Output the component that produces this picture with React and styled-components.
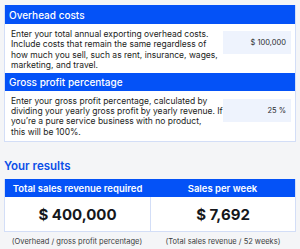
import React from "react";
import styled, { createGlobalStyle } from "styled-components";

const Global = createGlobalStyle`
  html, body { margin: 0; padding: 0; background: #f4f5f7; }
  body { font-family: Inter, "Noto Sans", sans-serif; }
`;

const Page = styled.div`
  padding: 5px 4px 0 4px;
  width: 292px;
`;

const Card = styled.div`
  background: #fff;
  border: 1px solid #d3def7;
  border-top: none;
`;

const Header = styled.div`
  background: #0452f7;
  color: #fff;
  height: ${(p) => p.$h || 19}px;
  display: flex;
  align-items: center;
  padding-left: 4px;
  font-size: 10px;
  font-weight: 500;
`;

const Body = styled.div`
  display: flex;
  align-items: flex-start;
  justify-content: space-between;
  padding: ${(p) => p.$pad};
`;

const Desc = styled.p`
  margin: 0;
  width: 214px;
  font-size: 8.5px;
  line-height: 10.4px;
  color: #1b1d22;
  white-space: nowrap;
`;

const Input = styled.div`
  width: 64px;
  height: 23px;
  background: #eef3fd;
  display: flex;
  align-items: center;
  justify-content: flex-end;
  padding-right: 5px;
  font-size: 7.5px;
  color: #2a2c30;
  margin-top: ${(p) => p.$mt || 0}px;
`;

const ResultsTitle = styled.h2`
  margin: 17px 0 6px 0;
  font-size: 11.5px;
  font-weight: 600;
  color: #0b4fe8;
`;

const Table = styled.div`
  display: grid;
  grid-template-columns: 1fr 1fr;
  border: 1px solid #d3def7;
  border-top: none;
  background: #fff;
`;

const TH = styled.div`
  background: #0452f7;
  color: #fff;
  height: 18px;
  display: flex;
  align-items: center;
  justify-content: center;
  font-size: 9.5px;
  font-weight: 600;
`;

const TD = styled.div`
  height: 34px;
  display: flex;
  align-items: center;
  justify-content: center;
  font-size: 15px;
  font-weight: 700;
  color: #15171b;
  border-left: ${(p) => (p.$divider ? "1px solid #d3def7" : "none")};
`;

const Captions = styled.div`
  display: grid;
  grid-template-columns: 1fr 1fr;
  margin-top: 5px;
`;

const Caption = styled.div`
  text-align: center;
  font-size: 7.5px;
  color: #3a3c40;
`;

export default function App() {
  return (
    <>
      <Global />
      <Page>
        <Card>
          <Header>Overhead costs</Header>
          <Body $pad="5px 4px 2px 6px">
            <Desc>
              Enter your total annual exporting overhead costs.
              <br />
              Include costs that remain the same regardless of
              <br />
              how much you sell, such as rent, insurance, wages,
              <br />
              marketing, and travel.
            </Desc>
            <Input $mt={2}>$ 100,000</Input>
          </Body>
          <Header $h={18}>Gross profit percentage</Header>
          <Body $pad="5px 4px 4px 6px">
            <Desc>
              Enter your gross profit percentage, calculated by
              <br />
              dividing your yearly gross profit by yearly revenue. If
              <br />
              you’re a pure service business with no product,
              <br />
              this will be 100%.
            </Desc>
            <Input $mt={3}>25 %</Input>
          </Body>
        </Card>
        <ResultsTitle>Your results</ResultsTitle>
        <Table>
          <TH>Total sales revenue required</TH>
          <TH>Sales per week</TH>
          <TD>$ 400,000</TD>
          <TD $divider>$ 7,692</TD>
        </Table>
        <Captions>
          <Caption>(Overhead / gross profit percentage)</Caption>
          <Caption>(Total sales revenue / 52 weeks)</Caption>
        </Captions>
      </Page>
    </>
  );
}
